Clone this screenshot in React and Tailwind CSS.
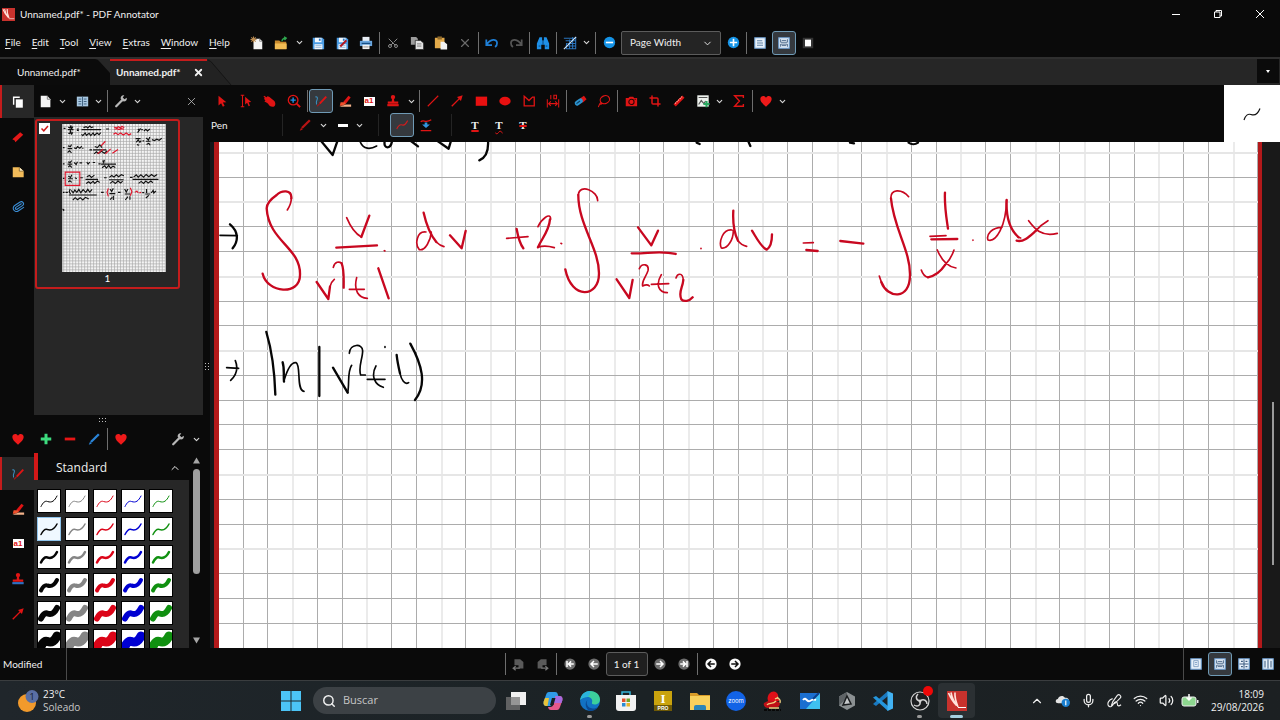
import React from "react";
import clsx from "clsx";
import {
  ChevronDown,
  ChevronUp,
  Crop,
  Mic,
  Paperclip,
  Scissors,
  Search,
  Volume2,
  Wifi,
  X,
} from "lucide-react";

function Svg({ size = 14, box = "0 0 16 16", className, children }) {
  return (
    <svg
      width={size}
      height={size}
      viewBox={box}
      fill="none"
      className={clsx("shrink-0", className)}
      aria-hidden="true"
    >
      {children}
    </svg>
  );
}

const RED = "#e01414";
const BLUE = "#1e90e8";

/* ---------- toolbar icons, 16 x 16 grid ---------- */

const HeartIcon = () => (
  <Svg>
    <path d="M8 14.5C4 11 1.5 8.8 1.5 5.8 1.5 1.8 6.4 1 8 4.2 9.6 1 14.5 1.8 14.5 5.8c0 3-2.5 5.2-6.5 8.7z" fill="#ee1a1a" />
  </Svg>
);

const WrenchIcon = () => (
  <Svg>
    <path d="M2.5 14 9 7.5" stroke="#b8b8b8" strokeWidth="2.6" strokeLinecap="round" />
    <path d="M14.6 4.2 12 6 10 4l1.8-2.6C9 .8 7 3 7.7 5.8L10.2 8.3C13 9 15.2 7 14.6 4.2z" fill="#b8b8b8" />
  </Svg>
);

const NewIcon = () => (
  <Svg>
    <path d="M4 3h7l3 3v9H4z" fill="#f4f4f4" />
    <path d="M11 3v3h3" stroke="#888" />
    <path d="M4 .5v7M.5 4h7M1.500 1.500l5 5M6.500 1.500l-5 5" stroke="#b98a50" strokeWidth="1.200" />
  </Svg>
);

const OpenIcon = () => (
  <Svg>
    <path d="M1 5h5l1.500 1.500H14V15H1z" fill="#c98a2c" />
    <path d="M1 8.500h13.500V15H1z" fill="#f2bd55" />
    <path d="M9 6c.5-3 2-3.500 4-3.500M11.500.8l2.500 1.700L12 4.500" stroke="#2fa84f" strokeWidth="1.500" />
  </Svg>
);

const SaveIcon = ({ edit }) => (
  <Svg>
    <path d="M2 2h11l2 2v11H2z" fill="#4a9ce4" />
    <path d="M4.500 2h7.500v5H4.500zM4 9.500h9V15H4z" fill="#f3f8fd" />
    <path d="M9 3h2v2.500H9z" fill="#2878c4" />
    <path d="M5 11h7M5 13h7" stroke="#8fb6da" />
    {edit && <path d="m6 12 7-7" stroke="#b01722" strokeWidth="2.400" />}
  </Svg>
);

const PrintIcon = () => (
  <Svg>
    <path d="M4 1h8v5H4z" fill="#e8eef5" />
    <path d="M1 5.500h14v6H1z" fill="#6ba7df" />
    <path d="M3 8.500h10" stroke="#174f84" strokeWidth="1.500" />
    <path d="M4 10h8v5H4z" fill="#f2f2f2" />
    <path d="M5 12.500h6" stroke="#888" />
  </Svg>
);

const CopyIcon = () => (
  <Svg>
    <path d="M1 1h6l2 2v7H1z" fill="#9c9c9c" />
    <path d="M6 5h6l3.500 3v7.500H6z" fill="#e2e2e2" stroke="#222" strokeWidth=".8" />
    <path d="M8 9h5M8 11.500h5" stroke="#777" />
  </Svg>
);

const PasteIcon = () => (
  <Svg>
    <path d="M1 2h11v12H1z" fill="#e3aa4a" />
    <path d="M4 .5h5V4H4z" fill="#8f6a2c" />
    <path d="M7.500 6.500h4l3.500 3v6H7.500z" fill="#f3f3f3" />
  </Svg>
);

const UndoIcon = ({ redo }) => (
  <Svg className={redo && "-scale-x-100"}>
    <path d="M1.500 4v6.500H8M2 10C6 3 13.500 3 13.800 8c.1 2-1 3.500-2.300 4.500" stroke={redo ? "#555" : "#1f7fd6"} strokeWidth="2" />
  </Svg>
);

const FindIcon = () => (
  <Svg>
    <path d="M4 1.500h3V5h2V1.500h3l3 7V15h-5v-5H6v5H1V8.500z" fill={BLUE} />
    <path d="M8 5v5M3 11.500h2M11 11.500h2" stroke="#0a3d70" />
  </Svg>
);

const PatternIcon = () => (
  <Svg>
    <path d="M1 2.500h14M3 5.500h12M5 8.500h10M3 11.500h12M3 14.500h12M4 14V8M7.500 15V4M11 15V1M14.500 15V1" stroke="#2a74bd" strokeWidth="1.200" />
    <path d="M1 15 15 1" stroke="#d8e8f8" strokeWidth="1.200" />
  </Svg>
);

const ZoomIcon = ({ plus }) => (
  <Svg size={13}>
    <circle cx="8" cy="8" r="7" fill="#1593e6" />
    <path d={plus ? "M3.500 8h9M8 3.500v9" : "M3.500 8h9"} stroke="#fff" strokeWidth="2" />
  </Svg>
);

const ViewIcon = ({ kind }) => (
  <Svg size={12}>
    <path d="M1 1h14v14H1z" fill="#e8f1fa" stroke="#6d9fd2" strokeWidth="1.400" />
    {kind === "page" && <path d="M4 5h7M4 8h8M4 11h8" stroke="#5d7fa5" strokeWidth="1.300" />}
    {kind === "cont" && <path d="M3.500 3v4h9V3M3.500 13V9.500h9V13M5 4.500h6M5 11.500h6" stroke="#3e5d80" strokeWidth="1.200" />}
    {kind === "single" && <path d="M5 3.500h6v8H5zM6.500 6h3M6.500 8.500h3" stroke="#6b8fb8" />}
    {kind === "grid" && <path d="M8 2v12M2 8h12M4 4.500h2.500M10 4.500h2.500M4 11.500h2.500M10 11.500h2.500" stroke="#3e5d80" strokeWidth="1.400" />}
    {kind === "two" && <path d="M8 2v12M4 3.500v9M12 3.500v9" stroke="#3e5d80" strokeWidth="1.400" />}
  </Svg>
);

const FullIcon = () => (
  <Svg size={12}>
    <path d="M1 1h14v14H1z" fill="#333" />
    <path d="M4 3.500h8v9H4z" fill="#fff" />
  </Svg>
);

const PageIcon = () => (
  <Svg>
    <path d="M2 2h7.500L13 6v9H2z" fill="#f4f4f4" />
    <path d="M9.500 2v4H13" stroke="#777" />
  </Svg>
);

const BookIcon = () => (
  <Svg size={13}>
    <path d="M1 2h14v12H1z" fill="#a8c8e2" />
    <path d="M8 2v12M3 5h3.500M3 8h3.500M3 11h3.500M9.500 5H13M9.500 8H13M9.500 11H13" stroke="#41627f" strokeWidth="1.200" />
  </Svg>
);

const ArrowIcon = () => (
  <Svg>
    <path d="M4 2v11l3-2.500 2 4 2-1-2-3.700 4-.3z" fill={RED} />
  </Svg>
);

const TextCursorIcon = () => (
  <Svg>
    <path d="M2 1.500h4M4 1.500v13M2 14.500h4" stroke={RED} strokeWidth="1.200" />
    <path d="M7 3v9l2.300-2 1.700 4 1.500-.7L11 9.500l3-.3z" fill={RED} />
  </Svg>
);

const HandIcon = () => (
  <Svg>
    <path d="m1 5 3-1 1-1.500 2 .5 6 5c2 3 1 6-1 6.500-3 .5-5-1-6-3L3 8z" fill={RED} />
    <path d="M1 2.500 7 7M2 8l4 2" stroke={RED} strokeWidth="1.500" />
  </Svg>
);

const MagnifierIcon = () => (
  <Svg>
    <circle cx="7" cy="7" r="5.500" stroke={RED} strokeWidth="1.500" />
    <path d="m11 11 4 4" stroke={RED} strokeWidth="2.200" />
    <path d="M7 4v6M4 7h6" stroke={BLUE} strokeWidth="1.600" />
  </Svg>
);

const PenIcon = () => (
  <Svg>
    <path d="M1.500 3.500c2-1 3 1 2 3S2 10 3 12" stroke="#3c8fbe" strokeWidth="1.200" />
    <path d="m6.500 11 7.500-8" stroke={RED} strokeWidth="2.200" />
    <path d="m3.500 14 3-3" stroke="#a01818" strokeWidth="1.400" />
  </Svg>
);

const MarkerIcon = () => (
  <Svg>
    <path d="m6 9 6-7 2.500 2-5.500 7z" fill={RED} />
    <path d="M3 9.500h5l1 2-4 2H2z" fill="#f0502c" />
    <path d="M1.500 14.500 9 12h6v2.500z" fill="#f3b28a" />
  </Svg>
);

const TextBoxIcon = () => (
  <span className="flex h-[9px] w-[11px] items-center justify-center bg-white font-['Liberation_Sans',sans-serif] text-[8px] leading-none font-bold text-[#e01414]">
    a1
  </span>
);

const StampIcon = ({ ink = RED }) => (
  <Svg>
    <circle cx="8" cy="3.500" r="2.500" fill={RED} />
    <path d="M7 4h2l.5 4.500H14V11H2V8.500h4.500z" fill={RED} />
    <path d="M1.500 11.500h13V14h-13z" fill={ink} />
  </Svg>
);

const LineIcon = () => (
  <Svg>
    <path d="m2 14 12-12" stroke={RED} strokeWidth="1.300" />
  </Svg>
);

const LineArrowIcon = () => (
  <Svg>
    <path d="m2 14 9-9" stroke={RED} strokeWidth="1.600" />
    <path d="m14.500 1.500-2 6.500-4.500-4.500z" fill={RED} />
  </Svg>
);

const RectIcon = () => (
  <Svg>
    <path d="M2 3h13v10.500H2z" fill="#e81010" />
  </Svg>
);

const EllipseIcon = () => (
  <Svg>
    <ellipse cx="8" cy="8" rx="6.500" ry="5" fill="#e81010" />
  </Svg>
);

const PolygonIcon = () => (
  <Svg>
    <path d="M2.500 2.500 8 7.500l4-4h2v10H2.500z" stroke={RED} strokeWidth="1.500" />
  </Svg>
);

const MeasureIcon = () => (
  <Svg>
    <path d="M1.500 6v9.500M14.500 6v9.500M3 11h10M5.500 8.500 3 11l2.500 2.500M10.500 8.500 13 11l-2.500 2.500M5.500 1v5M9 1.500h3v4H9z" stroke={RED} strokeWidth="1.200" />
  </Svg>
);

const EraserIcon = () => (
  <Svg>
    <path d="m8 5 4.500-3 3 4L11 10z" fill={RED} />
    <rect x="1.500" y="6.500" width="10" height="5.500" rx="2.500" fill="#2c93cf" transform="rotate(-35 6.500 9)" />
    <path d="m4 11 4-3" stroke="#0c3c5e" strokeWidth="1.300" />
  </Svg>
);

const LassoIcon = () => (
  <Svg>
    <ellipse cx="9" cy="6.500" rx="5.500" ry="4.500" stroke={RED} strokeWidth="1.300" transform="rotate(-25 9 6.500)" />
    <path d="M4.500 9.500C2.500 11 4 12.500 5 11.500s-1-2-2 0L1.500 15" stroke={RED} strokeWidth="1.200" />
  </Svg>
);

const CameraIcon = () => (
  <Svg>
    <path d="M2 4.500h3L6.500 3h4l1 1.500H15V14H2z" fill={RED} />
    <circle cx="8.500" cy="9" r="3" stroke="#2a0505" strokeWidth="1.200" />
    <path d="M12 6h1.500" stroke="#2a0505" />
  </Svg>
);

const RulerPenIcon = () => (
  <Svg>
    <path d="m3 13 10-10" stroke={RED} strokeWidth="3.600" />
    <path d="m3.500 11 8-8" stroke="#ffb0a0" strokeWidth="1.300" strokeDasharray="1.500 1" />
  </Svg>
);

const PictureIcon = () => (
  <Svg>
    <path d="M1.500 1.500h13v13h-13z" fill="#eef2ee" />
    <path d="M3 4h10M3 12l3-4.500L9 11l2-3" stroke="#555" strokeWidth="1.300" />
    <path d="M12 8v7M8.500 11.500h7" stroke="#2aa860" strokeWidth="2.400" />
  </Svg>
);

const SigmaIcon = () => (
  <Svg>
    <path d="M13 4.500V2H3L8.500 8 3 14h10v-2.500" stroke={RED} strokeWidth="1.600" />
  </Svg>
);

const BigPenIcon = ({ color = "#d81616" }) => (
  <Svg>
    <path d="m4.500 11.500 9-9" stroke={color} strokeWidth="2.600" />
    <path d="m2 14.500 1.500-3.500 2 2z" fill={color} />
  </Svg>
);

const StrokeIcon = () => (
  <Svg>
    <path d="M2 12.500C4 8 6 7 8.500 8S12 7 14.500 3" stroke="#d41c1c" strokeWidth="1.200" />
  </Svg>
);

const SmoothIcon = () => (
  <Svg>
    <path d="M2 4.500C5 1 7 6.500 14 2M2 14.500h12" stroke={RED} strokeWidth="1.500" />
    <path d="M6.500 5h3v2.500h3l-4.500 4-4.500-4h3z" fill="#3296df" />
  </Svg>
);

const PlusIcon = () => (
  <Svg>
    <path d="M8 2v12M2 8h12" stroke="#3ddc7f" strokeWidth="3.400" />
  </Svg>
);

const MinusIcon = () => (
  <Svg>
    <path d="M2 8h12" stroke="#e81515" strokeWidth="3.200" />
  </Svg>
);

const PagesIcon = () => (
  <Svg>
    <path d="M3 11V2.500h7" stroke="#fff" strokeWidth="1.600" />
    <path d="M5.500 5h8v9.500h-8z" fill="#fff" />
  </Svg>
);

const BookmarkIcon = () => (
  <Svg>
    <path d="m1.500 10.500 9-8 3.500 3-9 8.500-.8-2z" fill="#e31818" />
  </Svg>
);

const NoteIcon = () => (
  <Svg>
    <path d="M2 2.500h7.500l5 4.500v7H2z" fill="#f2bb59" />
    <path d="M9.500 2.500V7h5" fill="#fff0cc" stroke="#6d4c12" strokeWidth=".8" />
  </Svg>
);

const ImportIcon = ({ flip }) => (
  <Svg size={13} className={flip && "-scale-x-100"}>
    <path d="M3 1.500h7l4 3.500v8H8V9H3z" fill="#5a5a5a" />
    <path d="M1.500 12.500h8M4.500 10l-3 2.500 3 2.500" stroke="#777" strokeWidth="1.600" />
  </Svg>
);

function NavIcon({ bright, flip, bar }) {
  return (
    <Svg size={12} className={flip && "-scale-x-100"}>
      <circle cx="8" cy="8" r="7.500" fill={bright ? "#fafafa" : "#6e6e6e"} />
      <path
        d={bar ? "M4 4v8M13 8H6.500M9.500 4.500 6 8l3.500 3.500" : "M13 8H4.500M8 4 4 8l4 4"}
        stroke={bright ? "#111" : "#fff"}
        strokeWidth="2"
      />
    </Svg>
  );
}

const AppLogo = ({ size = 13 }) => (
  <Svg size={size} box="0 0 20 20">
    <path d="M0 0h20v20H0z" fill="#c8322d" />
    <path d="M1.500 2C4 8 7 12 9.500 14.500M4 1.500c1 6 3.500 10 6 13M8 1.500c-.5 5 1 9.500 3 14.500" stroke="#ffe3dc" strokeWidth="1.600" />
    <path d="M11 16.500h8" stroke="#fff" />
  </Svg>
);

/* ---------- building blocks ---------- */

function Tool({ label, active, children }) {
  return (
    <button
      type="button"
      aria-label={label}
      className={clsx(
        "flex h-6 w-6 shrink-0 items-center justify-center",
        active && "rounded-[3px] border border-[#6f9ab5] bg-[#35393e]"
      )}
    >
      {children}
    </button>
  );
}

function Drop({ label = "More options", tight }) {
  return (
    <button
      type="button"
      aria-label={label}
      className={clsx("flex h-6 shrink-0 items-center justify-center", tight ? "w-3 pr-1" : "w-[13px]")}
    >
      <ChevronDown size={9} strokeWidth={3} color="#d8d8d8" className="shrink-0" />
    </button>
  );
}

function Sep({ dim }) {
  return <div className={clsx("mx-px h-[22px] w-px shrink-0", dim ? "bg-[#242424]" : "bg-[#6e6e6e]")} />;
}

const MENU = ["File", "Edit", "Tool", "View", "Extras", "Window", "Help"];

function TitleBar() {
  return (
    <header className="flex h-7 shrink-0 items-center pl-[2px]">
      <AppLogo />
      <h1 className="ml-[5px] flex-1 text-[10px]">Unnamed.pdf* - PDF Annotator</h1>
      <button type="button" aria-label="Minimize" className="flex h-7 w-[42px] items-center justify-center">
        <Svg size={10} box="0 0 10 10"><path d="M1 5.500h8" stroke="#fff" /></Svg>
      </button>
      <button type="button" aria-label="Restore" className="flex h-7 w-[42px] items-center justify-center">
        <Svg size={10} box="0 0 10 10">
          <path d="M1.500 3h5.500v5.500H1.500zM3 3V1.500h5.500V7H7" stroke="#fff" />
        </Svg>
      </button>
      <button type="button" aria-label="Close" className="flex h-7 w-[41px] items-center justify-center">
        <Svg size={10} box="0 0 10 10"><path d="m1 1 8 8M9 1 1 9" stroke="#fff" /></Svg>
      </button>
    </header>
  );
}

function MenuBar() {
  return (
    <div className="flex h-[29px] shrink-0 items-center">
      <nav className="flex w-[245px] shrink-0 gap-[11px] pl-[5px] text-[10px]">
        {MENU.map((name) => (
          <button type="button" key={name}>
            <u className="underline-offset-2">{name[0]}</u>
            {name.slice(1)}
          </button>
        ))}
      </nav>
      <Tool label="New"><NewIcon /></Tool>
      <Tool label="Open"><OpenIcon /></Tool>
      <Drop />
      <Tool label="Save"><SaveIcon /></Tool>
      <Tool label="Save annotations"><SaveIcon edit /></Tool>
      <Tool label="Print"><PrintIcon /></Tool>
      <Sep />
      <Tool label="Cut"><Scissors size={12} color="#8a8a8a" className="-rotate-90" /></Tool>
      <Tool label="Copy"><CopyIcon /></Tool>
      <Tool label="Paste"><PasteIcon /></Tool>
      <Tool label="Delete"><X size={14} color="#6a6a6a" /></Tool>
      <Sep />
      <Tool label="Undo"><UndoIcon /></Tool>
      <Tool label="Redo"><UndoIcon redo /></Tool>
      <Sep />
      <Tool label="Find"><FindIcon /></Tool>
      <Sep />
      <Tool label="Background"><PatternIcon /></Tool>
      <Drop tight />
      <Sep />
      <Tool label="Zoom out"><ZoomIcon /></Tool>
      <div className="relative h-6 w-[100px] shrink-0">
        <select
          aria-label="Zoom"
          defaultValue="Page Width"
          className="block h-6 w-full appearance-none rounded-[2px] border border-[#5c5c5c] bg-[#242424] pl-2 text-[10px] text-[#f0f0f0]"
        >
          <option>Page Width</option>
          <option>Full Page</option>
        </select>
        <ChevronDown size={11} className="pointer-events-none absolute top-[7px] right-2" />
      </div>
      <Tool label="Zoom in"><ZoomIcon plus /></Tool>
      <Sep />
      <Tool label="Page view"><ViewIcon kind="page" /></Tool>
      <Tool label="Continuous view" active><ViewIcon kind="cont" /></Tool>
      <Tool label="Full screen"><FullIcon /></Tool>
    </div>
  );
}

function DocumentTabs() {
  return (
    <div className="flex h-7 shrink-0 border-t-2 border-[#2f2f2f] bg-[#262626] text-[10px]">
      <button type="button" className="relative w-[110px] pl-[17px] text-left">
        <svg className="absolute inset-0 h-full w-full" viewBox="0 0 110 26" preserveAspectRatio="none" aria-hidden="true">
          <path d="M0 0h95q3 0 5 3l10 11v12H0z" fill="#0b0b0b" />
        </svg>
        <span className="relative">Unnamed.pdf*</span>
      </button>
      <div className="relative flex w-[122px] items-center pl-[6px]">
        <svg className="absolute inset-0 h-full w-full" viewBox="0 0 122 26" preserveAspectRatio="none" aria-hidden="true">
          <path d="M0 0h97l4 2 20 24H0z" fill="#222" />
          <path d="M98 1q3 1 5 4l18 21" stroke="#151515" fill="none" />
          <path d="M0 1h97" stroke="#c41c1c" strokeWidth="2" />
        </svg>
        <button type="button" className="relative w-[70px] text-left font-bold">Unnamed.pdf*</button>
        <button type="button" aria-label="Close tab" className="relative ml-[7px]">
          <X size={11} strokeWidth={4} />
        </button>
      </div>
      <div className="flex-1" />
      <button type="button" aria-label="Tab list" className="mr-px flex h-6 w-[22px] items-center justify-center bg-[#0b0b0b]">
        <Svg size={6} box="0 0 6 6"><path d="M1 2h4L3 5z" fill="#fff" /></Svg>
      </button>
    </div>
  );
}

function SideItem({ label, active, children }) {
  return (
    <button
      type="button"
      aria-label={label}
      className={clsx(
        "flex h-[33px] items-center justify-center border-l-2",
        active ? "border-[#c41c1c] bg-[#272727]" : "border-transparent"
      )}
    >
      {children}
    </button>
  );
}

function SideStrip() {
  return (
    <aside className="flex w-[34px] shrink-0 flex-col justify-between">
      <div className="flex flex-col gap-[2px]">
        <SideItem label="Pages" active><PagesIcon /></SideItem>
        <SideItem label="Bookmarks"><BookmarkIcon /></SideItem>
        <SideItem label="Notes"><NoteIcon /></SideItem>
        <SideItem label="Attachments"><Paperclip size={13} color="#3b8ed6" className="rotate-12" /></SideItem>
      </div>
      <div className="flex h-[226px] flex-col gap-[2px]">
        <SideItem label="Favorites"><HeartIcon /></SideItem>
        <SideItem label="Pens" active><PenIcon /></SideItem>
        <SideItem label="Markers"><MarkerIcon /></SideItem>
        <SideItem label="Text"><TextBoxIcon /></SideItem>
        <SideItem label="Stamps"><StampIcon ink="#2f6fc0" /></SideItem>
        <SideItem label="Arrows"><LineArrowIcon /></SideItem>
      </div>
    </aside>
  );
}

function Thumbnail() {
  return (
    <div className="w-[145px] rounded-[3px] border-2 border-[#c41c1c] p-[2px]">
      <div className="flex">
        <label className="relative h-[11px] w-[11px] bg-white">
          <input type="checkbox" defaultChecked aria-label="Select page 1" className="block h-full w-full appearance-none" />
          <svg className="pointer-events-none absolute inset-0" viewBox="0 0 11 11" fill="none" aria-hidden="true">
            <path d="m2.500 5.500 2.300 2.300L9 3" stroke="#d01818" strokeWidth="1.500" />
          </svg>
        </label>
        <svg width="104" height="148" viewBox="186 102 312 446" fill="none" className="mt-px ml-3" aria-hidden="true">
          <defs>
            <pattern id="thumbGrid" width="9" height="9" patternUnits="userSpaceOnUse">
              <path d="M0 1.500h9M1.500 0v9" stroke="#a8a8a8" strokeWidth="2" />
            </pattern>
          </defs>
          <rect x="186" y="102" width="312" height="446" fill="#f4f4f4" />
          <rect x="186" y="102" width="312" height="446" fill="url(#thumbGrid)" />
          <g stroke="#111" strokeWidth="3.500">
            <path d="M190 115h6M204 112l6 2 2-8 2 10 4-6M203 119h17M204 130l5 1 2-8 3 9 4-5M230 117h6M230 121h6M250 113l8-3 5 4 6-6 5 5 6-3M244 119h59M244 133l4 4 7-8 4 7 8-6 5 7 7-8 4 7 8-7 6 5 5-6M318 117h9M414 117l4 4 4-6M413 128l9-12M424 119h5M432 123l6-5 5 5 7-6M407 146h15M409 157l6-7 5 7 4-5M411 164l7 2M428 153h5M439 144l7 6 4-9M438 154h14M440 164l7-4 4 6M456 149l8 3 7-4 7 3 8-6" />
            <path d="M188 173h5M203 168l8 2 3-6M202 176h14M202 188l6-5 6 6M222 174l6 2 4-6 7 5 6-6M246 175h4M268 180h8M284 170l8 3 7-8 7 8M279 180h40M282 192l7-6 6 5 9-7 9 6 8-7" />
            <path d="M188 222h5M204 216l6 2 5-6M202 223h14M204 232l5-5 6 6M222 218l6 6 4-8M238 219h8M260 217l4 6 5-6M278 218h7M295 222h7M308 212l3 6 2-8M303 223h45M306 234l8-6 5 7 7-8 6 8 7-6 7 4" />
            <path d="M188 266h5M204 259l7 4 4-8M203 267h15M204 277l5-4 6 5M224 264l6 3M240 264h8M260 261l8-4 6 6 9-7M256 269h38M258 281l8-5 5 5 8-6 5 6 8-7 7 4M312 264h8M328 263l7-6 7 5 7-7 7 6 8-6 8 3M327 270h44M330 281l8-6 8 6 8-7 8 6 6-6M390 263h8M401 262l8-7 6 7 8-7 8 7 8-8 8 7 8-7 8 6 9-6M398 269h78M416 281l8-6 7 6 7-7 7 6 8-6 6 5" />
            <path d="M188 308h5M196 308h7M210 298l-3 8 4 7M213 302l6 7 5-8 6 7 6-9 6 10 7-9 8 8 6-9 6 8 7-8M206 316h84M218 331l7-7 7 6 8-6 8 7 8-8 10 5M303 308h8M330 298l5 7 5-9M328 312h18M330 330l7-7M340 318v13M354 308h8M374 298l5 9 5-9M374 313h18M376 331l8-10M390 320v10M427 309h6M440 298v12M436 313h15M438 325l9-8M454 310l6-8 2 8 6-6M187 358l4 3-3 3" />
          </g>
          <g stroke="#e0162c" strokeWidth="3.500">
            <path d="M342 111l7 3 6-4 6 4 5-5 7 4M343 118l8-2 6 3 7-3 8 2M340 133l7-4 7 5 8-5 8 6 9-6 8 6 7-4M303 168l13-14M292 192l17-14M316 192l16-15M337 190l17-11" />
            <path d="M195 247h44v40h-44zM325 296l-4 12 4 12M391 294l5 12-5 12M405 308l6-4 4 6M418 310l6-2" />
          </g>
        </svg>
      </div>
      <div className="text-center text-[10px] leading-[13px] text-white">1</div>
    </div>
  );
}

const SWATCH_COLORS = ["#050505", "#858585", "#dc0418", "#0000d2", "#109010"];
const SWATCH_WIDTHS = [1, 1.5, 2.5, 4, 6, 9];

function SwatchGrid() {
  return (
    <div className="grid flex-1 auto-rows-min grid-cols-[repeat(5,22px)] gap-[6px] overflow-hidden bg-[#272727] pt-[10px] pl-1">
      {SWATCH_WIDTHS.map((width, row) =>
        SWATCH_COLORS.map((color, col) => (
          <button
            type="button"
            key={color + width}
            aria-label={`Pen ${row + 1}-${col + 1}`}
            className={clsx(
              "h-[22px] overflow-hidden outline",
              row === 1 && col === 0 ? "bg-[#eff8ff] outline-[#8fc4ec]" : "bg-white outline-black"
            )}
          >
            <svg viewBox="0 0 22 22" fill="none" aria-hidden="true">
              <path
                d="M3 16.500C5 12.500 7 10.500 9.500 11.500 14 13 16.500 11 19 6"
                stroke={color}
                strokeWidth={width}
                strokeLinecap="round"
              />
            </svg>
          </button>
        ))
      )}
    </div>
  );
}

function Grip({ className }) {
  return (
    <div className={clsx("grid gap-[2px]", className)}>
      {Array.from({ length: 6 }, (_, i) => (
        <i key={i} className="h-px w-px bg-[#c0c0c0]" />
      ))}
    </div>
  );
}

function SidePanel() {
  return (
    <section className="flex w-[169px] shrink-0 flex-col">
      <div className="flex h-8 shrink-0 items-center">
        <Tool label="Page"><PageIcon /></Tool>
        <Drop tight />
        <Tool label="Layout"><BookIcon /></Tool>
        <Drop tight />
        <Sep />
        <Tool label="Page settings"><WrenchIcon /></Tool>
        <Drop tight />
        <div className="flex-1" />
        <Tool label="Close panel"><X size={13} strokeWidth={1.5} color="#bbb" /></Tool>
      </div>
      <div className="flex-1 bg-[#272727] pt-[2px] pl-px">
        <Thumbnail />
      </div>
      <div className="flex h-[10px] shrink-0 items-center justify-center pr-8">
        <Grip className="grid-cols-3" />
      </div>
      <div className="flex h-7 shrink-0 items-center">
        <Tool label="Add tool"><PlusIcon /></Tool>
        <Tool label="Remove tool"><MinusIcon /></Tool>
        <Tool label="Edit tool"><BigPenIcon color="#2a84d8" /></Tool>
        <Sep />
        <Tool label="Favorite"><HeartIcon /></Tool>
        <div className="flex-1" />
        <Tool label="Tool settings"><WrenchIcon /></Tool>
        <Drop />
      </div>
      <div className="flex h-[195px] shrink-0">
        <div className="flex w-[155px] flex-col">
          <button
            type="button"
            className="flex h-[27px] shrink-0 items-center justify-between border-l-4 border-[#d41818] pt-[3px] pr-2 pl-[18px] font-['Open_Sans','Noto_Sans',sans-serif] text-[12px]"
          >
            Standard
            <ChevronUp size={12} />
          </button>
          <SwatchGrid />
        </div>
        <div className="flex w-[14px] flex-col items-center py-1">
          <Svg size={7} box="0 0 7 7"><path d="M3.500.5 7 6.500H0z" fill="#a6a6a6" /></Svg>
          <div className="mt-[5px] h-[105px] w-[7px] rounded-full bg-[#a0a0a0]" />
          <div className="flex-1" />
          <Svg size={7} box="0 0 7 7"><path d="M3.500 6.500 0 .5h7z" fill="#a6a6a6" /></Svg>
        </div>
      </div>
    </section>
  );
}

function DrawingToolbar() {
  return (
    <div className="flex shrink-0">
      <div className="flex-1 pt-1 pb-[5px]">
        <div className="flex h-6 items-center">
          <Tool label="Select"><ArrowIcon /></Tool>
          <Tool label="Select text"><TextCursorIcon /></Tool>
          <Tool label="Pan"><HandIcon /></Tool>
          <Tool label="Zoom"><MagnifierIcon /></Tool>
          <Sep />
          <Tool label="Pen" active><PenIcon /></Tool>
          <Tool label="Marker"><MarkerIcon /></Tool>
          <Tool label="Text"><TextBoxIcon /></Tool>
          <Tool label="Stamp"><StampIcon /></Tool>
          <Drop />
          <Sep />
          <Tool label="Line"><LineIcon /></Tool>
          <Tool label="Arrow"><LineArrowIcon /></Tool>
          <Tool label="Rectangle"><RectIcon /></Tool>
          <Tool label="Ellipse"><EllipseIcon /></Tool>
          <Tool label="Polygon"><PolygonIcon /></Tool>
          <Tool label="Measure"><MeasureIcon /></Tool>
          <Sep />
          <Tool label="Eraser"><EraserIcon /></Tool>
          <Tool label="Lasso"><LassoIcon /></Tool>
          <Sep />
          <Tool label="Snapshot"><CameraIcon /></Tool>
          <Tool label="Crop"><Crop size={12} strokeWidth={3} color={RED} /></Tool>
          <Tool label="Laser pointer"><RulerPenIcon /></Tool>
          <Tool label="Insert picture"><PictureIcon /></Tool>
          <Drop tight />
          <Tool label="Formula"><SigmaIcon /></Tool>
          <Sep />
          <Tool label="Favorites"><HeartIcon /></Tool>
          <Drop tight />
        </div>
        <div className="flex h-6 items-center">
          <span className="w-[71px] shrink-0 pl-px text-[10px]">Pen</span>
          <Sep dim />
          <div className="flex w-[93px] shrink-0 items-center pl-[14px]">
            <BigPenIcon color="#b81414" />
            <span className="w-[5px]" />
            <Drop label="Pen color" />
            <span className="mr-[5px] ml-2 h-[3px] w-[10px] shrink-0 bg-white" />
            <Drop label="Line width" />
          </div>
          <Sep dim />
          <span className="w-[10px]" />
          <Tool label="Freehand" active><StrokeIcon /></Tool>
          <Tool label="Smooth"><SmoothIcon /></Tool>
          <span className="w-3" />
          <Sep dim />
          <span className="w-[10px]" />
          {["underline", "squiggly", "strikeout"].map((kind) => (
            <Tool key={kind} label={kind}>
              <span
                className={clsx(
                  "font-['Liberation_Serif',serif] text-[11px] leading-3 font-bold decoration-[#e01414]",
                  kind === "underline" && "underline decoration-2 underline-offset-1",
                  kind === "squiggly" && "underline decoration-wavy decoration-1 underline-offset-1",
                  kind === "strikeout" && "line-through decoration-2"
                )}
              >
                T
              </span>
            </Tool>
          ))}
        </div>
      </div>
      <div className="flex w-14 items-center justify-center bg-white">
        <Svg size={20} box="0 0 20 20">
          <path d="M2 16C3.500 11.500 6 9.500 9 10.500c4 1.500 7-1 9-6" stroke="#111" strokeWidth="1.200" />
        </Svg>
      </div>
    </div>
  );
}

/* ---------- document ---------- */

const FAINT_COLS = [2, 5, 8, 10, 13, 15, 18, 21, 24, 26, 29, 32, 34, 37, 40];
const FAINT_ROWS = [0, 2, 5, 8, 13, 16];

function GridLines() {
  return (
    <g>
      {Array.from({ length: 42 }, (_, i) => {
        const faint = FAINT_COLS.includes(i);
        const x = Math.floor(24 + i * 24.75);
        return (
          <rect key={`c${i}`} x={x} y="0" width={faint ? 2 : 1} height="100%" fill={faint ? "#ebebeb" : "#acacac"} />
        );
      })}
      {Array.from({ length: 20 }, (_, i) => {
        const faint = FAINT_ROWS.includes(i);
        const y = Math.floor(10.4 + i * 24.78);
        return (
          <rect key={`r${i}`} x="0" y={y} width="100%" height={faint ? 2 : 1} fill={faint ? "#e6e6e6" : "#acacac"} />
        );
      })}
    </g>
  );
}

// pen strokes come in two widths: light entry strokes and full pressure ones
function Ink() {
  return (
    <g fill="none" strokeLinecap="round" strokeLinejoin="round">
      <g transform="translate(-9 -12) scale(.3333)">
        <g stroke="#060606" strokeWidth="7">
          <path d="M334 34 368 75 382 34M524 34c-4 24 18 24 22 0M604 34l20 15M684 34l32 22 6-20M834 30c2 26-4 52-26 61" />
          <path d="M60 283c26 22 26 50 8 72M169 606c18 60 25 120 27 188M218 697c6 20 2 38 4 58M328 651v147M369 713 413 788M601 641c34 62 52 122 14 169M560 675c2 20 6 38 10 55" />
        </g>
        <g stroke="#060606" strokeWidth="5">
          <path d="M450 34c10 26 32 24 50 14M30 316l52 1M50 713l36 2M76 692c10 25 0 46-14 59M222 752c10-34 22-56 36-54 16 6 0 84 24 86M413 788c6-24-2-62 12-82M418 670c2-30 40-30 40-8 0 24-14 50-6 73l14 0M472 748h53M498 708c-16 30-4 56 22 64M525 650v2M570 730c4 18 14 36 26 28" />
        </g>
        <g stroke="#c80820" strokeWidth="7">
          <path d="M170 235c6 100 104 118 100 201 0 62-98 54-112-5M244 205c2-28-30-24-44-10-20 14-30 26-30 40M454 321 478 257M379 353l122-7M320 456 355 507 360 470M395 400c8 20 6 50 6 73M505 415 536 505M641 248c8 36 20 66 38 88M720 316 755 355 767 303M920 297c4 22 8 42 20 58M1020 268c-2 34-26 60-36 84" />
          <path d="M1105 195c0 90 64 163 62 237 0 70-82 80-101-14M1220 448 1258 504 1268 450" />
        </g>
        <g stroke="#c80820" strokeWidth="5">
          <path d="M232 240c8-12 12-24 12-35M410 263c10 24 26 48 44 58M523 362l2 1M360 470c2-10 8-18 13-22M370 412c4-18 18-18 25-12M418 478h45M440 443c-10 40 6 60 32 62M648 306c-28-4-34 38-20 53 18 4 34-28 36-53M679 336c8 8 14 12 23 14M890 325l64-5M984 290c10-22 38-46 38-22M984 352c16-6 32-4 49 1M1053 340l2 1M1163 212c2-28-54-54-58-17" />
        </g>
      </g>
      <g transform="translate(411 -12) scale(.3333)">
        <g stroke="#060606" strokeWidth="7">
          <path d="M200 38l9 4M355 34l6 14M660 38l12 2M836 38c8 6 20 6 28 0" />
        </g>
        <g stroke="#c80820" strokeWidth="7">
          <path d="M24 292 64 346 84 302M5 370c44 2 86-10 132 2M160 450c-2 24-16 36-6 58 8 8 24 6 34-6M310 242c-2 36 0 62 14 90M366 302c14 22 26 48 44 57 14-8 16-28 16-46M529 360l34 3M631 333l69 8" />
          <path d="M783 205c8 90 59 158 57 231 0 76-68 70-86 20M945 188c-2 40 4 72 9 108M904 328l78-1M946 404c-12 18-30 34-52 38M1130 210c-2 50 10 90 36 112M1160 332c22 6 42-16 58-30" />
        </g>
        <g stroke="#c80820" strokeWidth="5">
          <path d="M28 416c8-18 30-14 26 6-4 16-20 30-16 46 8-4 14-6 20 0M64 463l52-2M94 434c-18 30-8 54 18 54M138 444c4-14 20-18 22 6M306 300c-28-4-40 36-32 54 18 4 36-24 36-52M324 332c6 8 14 14 26 17M213 355v1M520 339l30-1" />
          <path d="M836 200c-20-24-56-24-53 5M754 456l-6-18M900 319l48-2M922 360c10 24 26 50 56 54M972 360c-6 18-14 32-26 44M894 442c-10-2-16-10-20-22M1029 330v1M1116 292c-30 0-48 22-42 38 24 8 54-40 56-120M1166 322l6 2M1196 272c18 24 38 50 86 38M1254 272c-14 8-26 18-36 30" />
        </g>
      </g>
    </g>
  );
}

function DocumentArea() {
  return (
    <main className="flex min-h-0 flex-1">
      <div className="w-1 shrink-0 bg-[#15161a]" />
      <div className="min-w-0 flex-1 overflow-hidden border-r-4 border-l-[5px] border-[#b3191b] bg-white">
        <svg className="block h-full w-full" role="img" aria-label="Handwritten integral on squared paper">
          <GridLines />
          <Ink />
        </svg>
      </div>
      <div className="flex w-[18px] shrink-0 flex-col items-center bg-[#191919] pl-1">
        <div className="flex-[260]" />
        <div className="w-[2px] flex-[163] bg-[#9a9a9a]" />
        <div className="flex-[83]" />
      </div>
    </main>
  );
}

function StatusBar() {
  return (
    <footer className="flex h-8 shrink-0 items-center text-[10px]">
      <span className="w-[66px] shrink-0 pl-[3px]">Modified</span>
      <div className="h-full w-px bg-[#4a4a4a]" />
      <div className="flex flex-1 items-center justify-center">
        <Sep />
        <Tool label="Import page"><ImportIcon /></Tool>
        <Tool label="Export page"><ImportIcon flip /></Tool>
        <Sep />
        <Tool label="First page"><NavIcon bar /></Tool>
        <Tool label="Previous page"><NavIcon /></Tool>
        <input
          aria-label="Page number"
          defaultValue="1 of 1"
          className="h-6 w-[42px] rounded-[3px] border border-[#5c5c5c] bg-[#1f1f1f] text-center text-[10px] text-[#f0f0f0]"
        />
        <Tool label="Next page"><NavIcon flip /></Tool>
        <Tool label="Last page"><NavIcon bar flip /></Tool>
        <Sep />
        <Tool label="Back"><NavIcon bright /></Tool>
        <Tool label="Forward"><NavIcon bright flip /></Tool>
      </div>
      <div className="h-full w-px bg-[#4a4a4a]" />
      <Tool label="Single page"><ViewIcon kind="single" /></Tool>
      <Tool label="Continuous" active><ViewIcon kind="cont" /></Tool>
      <Tool label="Two pages continuous"><ViewIcon kind="grid" /></Tool>
      <Tool label="Two pages"><ViewIcon kind="two" /></Tool>
    </footer>
  );
}

/* ---------- Windows taskbar, icons on a 20 x 20 grid ---------- */

const TASK_APPS = [
  {
    name: "Task view",
    icon: (
      <>
        <path d="M5 1h15v13H5z" fill="#f0f0f0" />
        <path d="M0 6h14v13H0z" fill="#777" fillOpacity=".75" />
      </>
    ),
  },
  {
    name: "Copilot",
    icon: (
      <>
        <path d="M6 1h6c2 0 2.500 1 3 3l1 3h-4c-2 0-2.500 1-3 2.500L7.500 15H3.500C1 15 0 13 .7 10.500L3 4c.6-2 1.500-3 3-3z" fill="#2f9be8" />
        <path d="M.7 10.500 2 7h4l-1.500 8h-1C1 15 0 13 .7 10.500z" fill="#e8c23a" />
        <path d="M14 19H8c-2 0-2.500-1-3-3h2.500c1.500 0 2.500-1 3-2.500L12.500 5h4c2.500 0 3.500 2 2.800 4.500L17 16c-.6 2-1.500 3-3 3z" fill="#e5588a" />
        <path d="M12.500 5h4c2.500 0 3.500 2 2.800 4.500l-.8 2.500h-8z" fill="#a66be0" />
        <path d="M9 7h3.500l-2 7H7z" fill="#1a1f22" />
      </>
    ),
  },
  {
    name: "Edge",
    running: true,
    icon: (
      <>
        <circle cx="10" cy="10" r="10" fill="#1272c4" />
        <path d="M.3 9C1 3.500 5 0 10 0c6 0 10 4 10 8.500 0 3-2.500 5-5.500 5-2 0-3-.8-2.500-2 1-3-1-5.500-4.500-5.500C4 6 1 7.500.3 9z" fill="#3ccf9c" />
        <path d="M.3 9C1 3.500 5 0 10 0c1 3-2 6-2.500 6C4 6 1 7.500.3 9z" fill="#2bb4dc" />
        <path d="M7.500 9c-2 3 0 8 5 8.500 2.500.2 4-.5 5.500-1.500-2 3-5 4-8 4-4-1-6-8-2.500-11z" fill="#0b4a94" />
      </>
    ),
  },
  {
    name: "Store",
    icon: (
      <>
        <path d="M6 4V1h8v3" stroke="#35b4d8" strokeWidth="1.500" />
        <path d="M0 4h20v13a3 3 0 0 1-3 3H3a3 3 0 0 1-3-3z" fill="#f2f2f2" />
        <path d="M6 7.500h3.500V11H6z" fill="#e2502a" />
        <path d="M10.500 7.500H14V11h-3.500z" fill="#72a62a" />
        <path d="M6 12h3.500v3.500H6z" fill="#2a8ad4" />
        <path d="M10.500 12H14v3.500h-3.500z" fill="#e8b42a" />
      </>
    ),
  },
  {
    name: "Inventor",
    icon: (
      <>
        <path d="M1 0h18v20H1z" fill="#c9a30e" />
        <path d="M1 14h18v6H1z" fill="#6e5906" />
        <text x="10" y="11.500" textAnchor="middle" fontFamily="Liberation Serif" fontWeight="bold" fontSize="13" fill="#fff">I</text>
        <text x="10" y="19" textAnchor="middle" fontFamily="Liberation Sans" fontWeight="bold" fontSize="5" fill="#fff">PRO</text>
      </>
    ),
  },
  {
    name: "File Explorer",
    icon: (
      <>
        <path d="M0 2h7l2 2h11v14H0z" fill="#d99c28" />
        <path d="M0 5h20v14H0z" fill="#f8d15c" />
        <path d="M4 19v-3q0-2 2-2h8q2 0 2 2v3z" fill="#2a86b8" />
      </>
    ),
  },
  {
    name: "Zoom",
    icon: (
      <>
        <circle cx="10" cy="10" r="10" fill="#1263e6" />
        <text x="10" y="12" textAnchor="middle" fontFamily="Inter" fontSize="6" fill="#fff">zoom</text>
      </>
    ),
  },
  {
    name: "CAD tool",
    icon: (
      <>
        <path d="M6 3c3-4 8-3 9 1l1 6-9 2c-3-2-3-6-1-9z" fill="#e01018" />
        <path d="M1 12c3-1 4-3 8-2l6 1c3 0 2 4 0 5l-10 1c-3 0-5-3-4-5z" fill="#c01016" />
        <path d="M4 14c2-3 6 0 9-4M12 8c3-2 6 0 5 4M6 17h10M14 6l3 3" stroke="#f0d080" strokeWidth="1.300" />
        <path d="M1 19h17" stroke="#080808" strokeWidth="2" strokeDasharray="3 1" />
      </>
    ),
  },
  {
    name: "Whiteboard",
    icon: (
      <>
        <path d="M0 2h20v16H0z" fill="#1b6fd0" />
        <path d="M20 2v16H6z" fill="#3fc0f0" />
        <path d="M3 9c3-4 4 3 7 1s4-2 6-1" stroke="#fff" strokeWidth="2" />
        <path d="m13 8 6-6" stroke="#0c3f8c" strokeWidth="2" />
      </>
    ),
  },
  {
    name: "Slicer",
    icon: (
      <>
        <path d="m10 1 8 4.500v9L10 19l-8-4.500v-9z" fill="#8b9092" />
        <path d="M10 1v6l-8 7.500v-9z" fill="#5e6366" />
        <path d="m10 5 4 8-8 1z" stroke="#1a1d1f" strokeWidth="1.500" fill="#c6c9cb" />
      </>
    ),
  },
  {
    name: "VS Code",
    icon: (
      <>
        <path d="M15 0v5L3 15 0 13z" fill="#1a79c0" />
        <path d="M0 6.500 3 5l12 10v5z" fill="#2496dc" />
        <path d="m14.500 0 5.500 2.500v15L14.500 20z" fill="#42b2f2" />
      </>
    ),
  },
  {
    name: "OBS",
    running: true,
    icon: (
      <>
        <circle cx="10" cy="10" r="9" fill="#1c1e20" stroke="#d4d4d4" strokeWidth="1.200" />
        <path d="M10 10C5 9 6 5 8 3M10 10c4-3 7 0 7 3M10 10c1 5-3 6-6 4" stroke="#d4d4d4" strokeWidth="1.500" />
        <circle cx="10" cy="10" r="1.500" fill="#d4d4d4" />
      </>
    ),
  },
];

function Taskbar() {
  return (
    <div className="flex h-10 shrink-0 items-center border-t border-[#3a3d3f] bg-gradient-to-r from-[#20262b] via-[#1b2225] to-[#1c2022] font-['Open_Sans','Noto_Sans',sans-serif] text-[#f0f0f0]">
      <button type="button" className="flex w-[281px] shrink-0 items-center pl-[17px] text-left">
        <Svg size={22} box="0 0 22 22">
          <circle cx="10" cy="13" r="9" fill="#f29a2c" />
          <circle cx="15" cy="6.500" r="6.500" fill="#5a6fa4" />
          <text x="15" y="9.500" textAnchor="middle" fontFamily="Open Sans" fontSize="9" fill="#101828">1</text>
        </Svg>
        <span className="ml-1 flex flex-col text-[10px] leading-[13px]">
          <span>23°C</span>
          <span className="text-[#c8c8c8]">Soleado</span>
        </span>
      </button>
      <button type="button" aria-label="Start" className="mr-3">
        <Svg size={20} box="0 0 20 20">
          <path d="M0 0h9.500v9.500H0zM10.500 0H20v9.500h-9.500zM0 10.500h9.500V20H0zM10.500 10.500H20V20h-9.500z" fill="#4cc4f6" />
        </Svg>
      </button>
      <label className="flex h-[27px] w-[183px] shrink-0 items-center rounded-full bg-[#3c4145] pl-[9px]">
        <Search size={14} strokeWidth={2.5} className="shrink-0" />
        <input aria-label="Buscar" placeholder="Buscar" className="ml-[7px] w-full bg-transparent text-[11px] outline-none placeholder:text-[#c6c6c6]" />
      </label>
      <div className="ml-[2px] grid w-[477px] shrink-0 grid-cols-13">
        {TASK_APPS.map((app) => (
          <button
            type="button"
            key={app.name}
            aria-label={app.name}
            className="relative flex h-[35px] items-center justify-center"
          >
            <Svg size={20} box="0 0 20 20">{app.icon}</Svg>
            {app.name === "OBS" && <i className="absolute top-[3px] right-[5px] h-[10px] w-[10px] rounded-full bg-[#ee0808]" />}
            {app.running && <i className="absolute bottom-0 h-[3px] w-[5px] rounded-full bg-[#9a9a9a]" />}
          </button>
        ))}
        <button type="button" aria-label="PDF Annotator" className="relative flex h-[35px] items-center justify-center rounded-[4px] bg-[#2b3033]">
          <AppLogo size={20} />
          <i className="absolute bottom-0 h-[3px] w-[13px] rounded-full bg-[#a5cfe0]" />
        </button>
      </div>
      <div className="flex-1" />
      <div className="flex shrink-0 items-center gap-[11px] pr-4">
        <ChevronUp size={14} />
        <Svg size={15}>
          <path d="M3.500 11C0 11 0 7 3 6.500 4 2.500 9 2 10.500 5c4 0 5 2 4.500 6z" fill="#e4e4e4" />
          <circle cx="11.500" cy="10.500" r="4.500" fill="#1a7fd0" />
          <path d="M11.500 8v5" stroke="#fff" strokeWidth="1.300" />
        </Svg>
        <Mic size={15} />
        <Svg size={15}>
          <path d="m6 9.500 5-7q1.500-1.500 3 0t0 3L8.500 11 5 12.500zM6 6C2 7 0 11 1.500 13.500S6 14 7 11.500s4-3 4 0 2 2.500 4 1" stroke="#eee" strokeWidth="1.200" />
        </Svg>
        <Wifi size={15} />
        <Volume2 size={15} className="-mr-1" />
        <Svg size={18} box="0 0 18 18">
          <rect x="1" y="5" width="14" height="9" rx="2" fill="#8ed890" stroke="#eee" />
          <path d="M16 8h1.500v3H16z" fill="#eee" />
          <path d="M8 2v6M5.500 5.500 8 8l2.500-2.500" stroke="#fff" strokeWidth="1.500" />
        </Svg>
        <time className="flex w-[54px] flex-col text-right text-[10px] leading-[13px] whitespace-nowrap">
          <span>18:09</span>
          <span>29/08/2026</span>
        </time>
      </div>
    </div>
  );
}

export default function App() {
  return (
    <div className="flex h-screen flex-col overflow-hidden bg-[#0a0a0a] font-[Lato,'Open_Sans',sans-serif] text-[#f0f0f0]">
      <TitleBar />
      <MenuBar />
      <DocumentTabs />
      <div className="flex min-h-0 flex-1">
        <SideStrip />
        <SidePanel />
        <div className="flex w-[7px] shrink-0 items-center justify-center">
          <Grip className="grid-cols-2" />
        </div>
        <div className="flex min-w-0 flex-1 flex-col">
          <DrawingToolbar />
          <DocumentArea />
        </div>
      </div>
      <StatusBar />
      <Taskbar />
    </div>
  );
}
